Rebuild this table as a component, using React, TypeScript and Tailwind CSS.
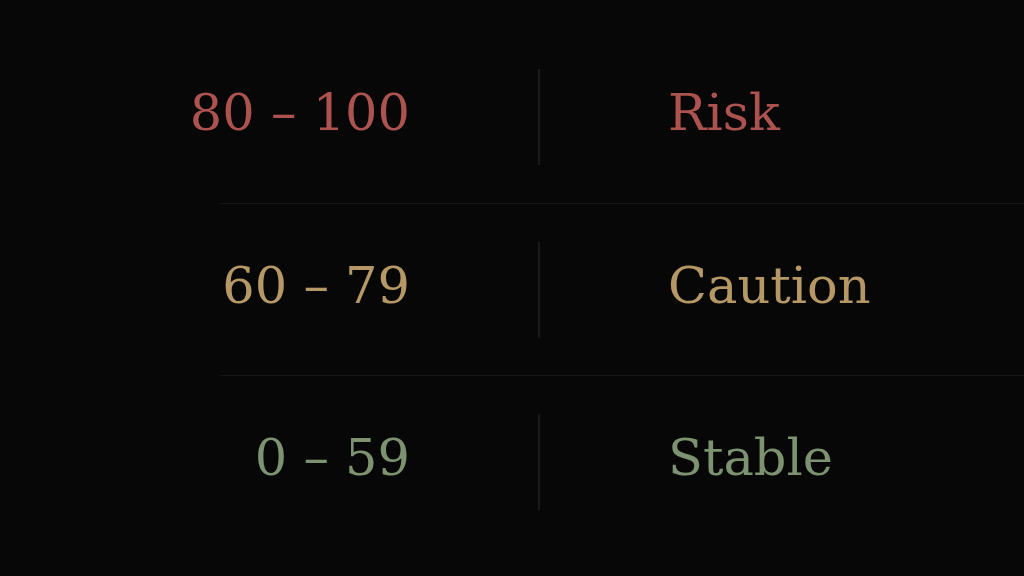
const ROWS = [
  { range: "80 – 100", label: "Risk", color: "text-[#ad534f]" },
  { range: "60 – 79", label: "Caution", color: "text-[#b59865]" },
  { range: "0 – 59", label: "Stable", color: "text-[#7d9270]" },
];

export default function App() {
  return (
    <div
      className="h-[576px] w-[1024px] overflow-hidden bg-[#070707] pt-[31px]"
      style={{ fontFamily: '"DejaVu Serif", serif' }}
    >
      <div className="ml-[220px]">
        {ROWS.map((row, i) => (
          <div
            key={row.label}
            className={`flex h-[172px] items-center ${i > 0 ? "border-t border-[#151515]" : ""}`}
          >
            <div
              className={`flex w-[190px] justify-end whitespace-nowrap pb-[9px] text-[51px] leading-none ${row.color}`}
            >
              {row.range}
            </div>
            <div className="mx-[128px] h-[96px] w-[2px] bg-[#1a1a1a]" />
            <div className={`whitespace-nowrap pb-[9px] text-[51px] leading-none ${row.color}`}>
              {row.label}
            </div>
          </div>
        ))}
      </div>
    </div>
  );
}
